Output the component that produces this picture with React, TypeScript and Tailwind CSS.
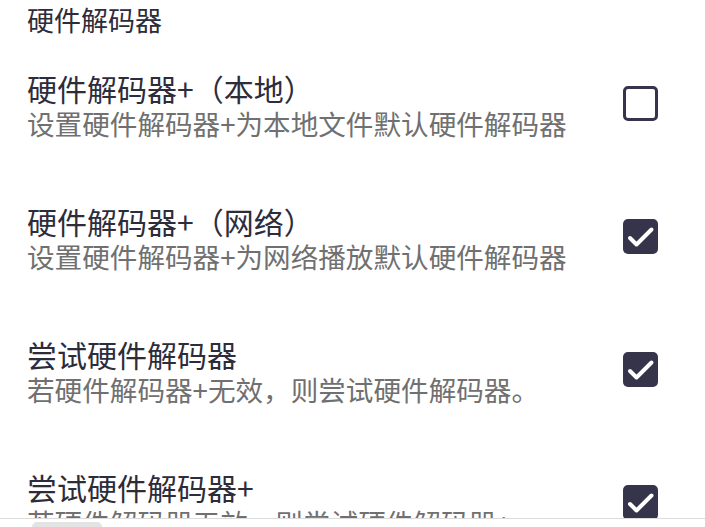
import { Fragment } from "react";

// 硬件解码器设置项
const OPTIONS = [
  {
    id: "hw-local",
    title: "硬件解码器+（本地）",
    desc: "设置硬件解码器+为本地文件默认硬件解码器",
    checked: false,
  },
  {
    id: "hw-net",
    title: "硬件解码器+（网络）",
    desc: "设置硬件解码器+为网络播放默认硬件解码器",
    checked: true,
  },
  {
    id: "try-hw",
    title: "尝试硬件解码器",
    desc: "若硬件解码器+无效，则尝试硬件解码器。",
    checked: true,
  },
  {
    id: "try-hw-plus",
    title: "尝试硬件解码器+",
    desc: "若硬件解码器无效，则尝试硬件解码器+",
    checked: true,
  },
];

function CheckBox({ checked }: { checked: boolean }) {
  if (!checked) {
    return (
      <div className="h-[35px] w-[35px] shrink-0 rounded-[5px] border-[3.5px] border-[#36344a] bg-white" />
    );
  }
  return (
    <div className="flex h-[35px] w-[35px] shrink-0 items-center justify-center rounded-[5px] bg-[#36344a]">
      <svg width="35" height="35" viewBox="0 0 35 35" fill="none">
        <path
          d="M7 19 L13.5 25.5 L28.5 10.5"
          stroke="#ffffff"
          strokeWidth="4"
          strokeLinecap="round"
          strokeLinejoin="round"
        />
      </svg>
    </div>
  );
}

export default function App() {
  return (
    <div
      className="relative h-[527px] w-[705px] overflow-hidden bg-white"
      style={{ fontFamily: '"Noto Sans CJK SC", "Noto Sans", sans-serif' }}
    >
      {/* 列表区域 */}
      <div className="h-[518px] overflow-hidden">
        <div className="flex h-[39px] items-center pl-[27px] text-[27px] leading-[38px] text-[#2d2c3a]">
          硬件解码器
        </div>

        {OPTIONS.map((opt) => (
          <Fragment key={opt.id}>
            <div className="flex items-center justify-between py-[31px] pl-[27px] pr-[47px]">
              <div className="flex flex-col">
                <div className="whitespace-nowrap text-[30px] leading-[36px] text-[#2d2c3a]">
                  {opt.title}
                </div>
                <div className="whitespace-nowrap text-[27.6px] leading-[35px] text-[#707070]">
                  {opt.desc}
                </div>
              </div>
              <div className="mb-[5px]">
                <CheckBox checked={opt.checked} />
              </div>
            </div>
          </Fragment>
        ))}
      </div>

      {/* 底部面板 */}
      <div className="h-[9px] border-t border-[#dcdcdc] bg-white pl-[32px] pt-[3px]">
        <div className="h-[10px] w-[70px] rounded-t-[5px] bg-[#e3e3e3]" />
      </div>
    </div>
  );
}
